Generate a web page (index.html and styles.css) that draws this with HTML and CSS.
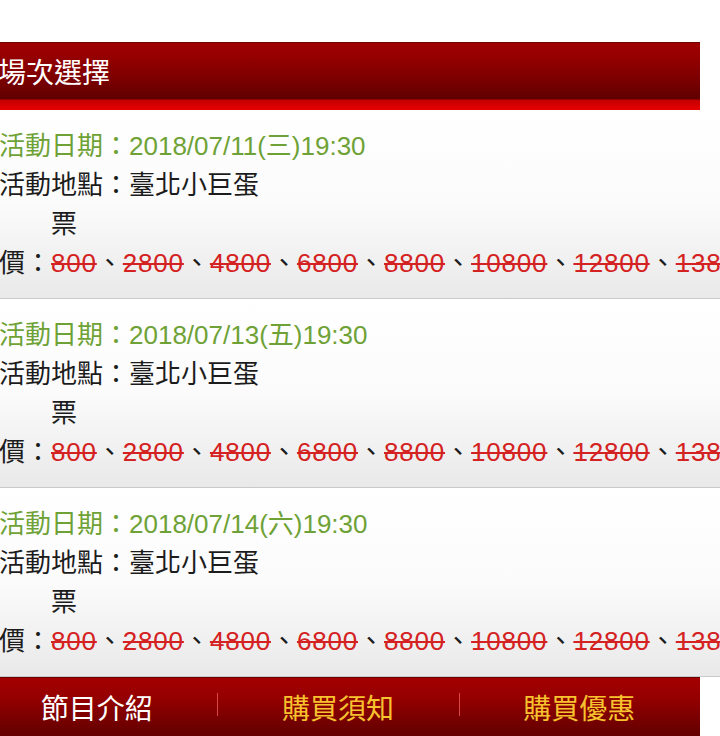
FILE: index.html
```html
<!DOCTYPE html>
<html lang="zh-Hant">
<head>
<meta charset="utf-8">
<title>場次選擇</title>
<link rel="stylesheet" href="styles.css">
</head>
<body>
<div class="page">
  <div class="section-title"><span class="section-title__text">場次選擇</span></div>

  <div class="session">
    <p class="line line--date">活動日期：2018/07/11(三)19:30</p>
    <p class="line">活動地點：臺北小巨蛋</p>
    <p class="line line--indent">票</p>
    <p class="line line--prices">價：<s>800</s>、<s>2800</s>、<s>4800</s>、<s>6800</s>、<s>8800</s>、<s>10800</s>、<s>12800</s>、<s>13800</s></p>
  </div>

  <div class="session">
    <p class="line line--date">活動日期：2018/07/13(五)19:30</p>
    <p class="line">活動地點：臺北小巨蛋</p>
    <p class="line line--indent">票</p>
    <p class="line line--prices">價：<s>800</s>、<s>2800</s>、<s>4800</s>、<s>6800</s>、<s>8800</s>、<s>10800</s>、<s>12800</s>、<s>13800</s></p>
  </div>

  <div class="session">
    <p class="line line--date">活動日期：2018/07/14(六)19:30</p>
    <p class="line">活動地點：臺北小巨蛋</p>
    <p class="line line--indent">票</p>
    <p class="line line--prices">價：<s>800</s>、<s>2800</s>、<s>4800</s>、<s>6800</s>、<s>8800</s>、<s>10800</s>、<s>12800</s>、<s>13800</s></p>
  </div>

  <nav class="tabbar">
    <a class="tab tab--active">節目介紹</a>
    <a class="tab">購買須知</a>
    <a class="tab">購買優惠</a>
  </nav>
</div>
</body>
</html>
```

FILE: styles.css
```css
html, body {
  margin: 0;
  padding: 0;
  background: #ffffff;
  overflow: hidden;
}

body {
  font-family: "Liberation Sans", "Noto Sans CJK TC", sans-serif;
  color: #1c1c1c;
}

.page {
  margin-left: -24px;
  width: 744px;
  padding-top: 42px;
}

.section-title {
  width: 724px;
  box-sizing: border-box;
  height: 68px;
  border-top: 1px solid #6e0000;
  background: linear-gradient(to bottom, #9e0000 0px, #990000 10px, #7c0000 36px, #5f0000 56px, #c40000 57px, #e60000 67px);
  padding-left: 22px;
  display: flex;
  align-items: flex-start;
}

.section-title__text {
  font-family: "Noto Sans CJK TC", sans-serif;
  color: #ffffff;
  font-size: 28px;
  line-height: 56px;
}

.session {
  box-sizing: border-box;
  height: 189px;
  padding: 17px 24px 15px 23px;
  border-bottom: 1px solid #c9c9c9;
  background: linear-gradient(to bottom, #ffffff 0%, #fbfbfb 50%, #e9e9e9 100%);
  overflow: hidden;
}

.line {
  margin: 0;
  font-size: 26px;
  line-height: 39px;
  height: 39px;
  white-space: nowrap;
}

.line--date {
  color: #6fa236;
}

.line--indent {
  padding-left: 52px;
}

.line--prices s {
  color: #d42222;
  letter-spacing: 0.8px;
  text-decoration: line-through;
  text-decoration-thickness: 2px;
}

.tabbar {
  width: 724px;
  height: 70px;
  box-sizing: border-box;
  border-top: 1px solid #6a0000;
  background: linear-gradient(to bottom, #a40000 0%, #940000 30%, #6a0000 75%, #5e0000 100%);
  display: grid;
  grid-template-columns: repeat(3, 1fr);
  align-items: start;
}

.tab {
  font-family: "Noto Sans CJK TC", sans-serif;
  font-size: 28px;
  line-height: 58px;
  text-align: center;
  color: #f7c22e;
  position: relative;
}

.tab--active {
  color: #ffffff;
}

.tab + .tab::before {
  content: "";
  position: absolute;
  left: 0;
  top: 15px;
  height: 23px;
  width: 1px;
  background: #d84848;
}
```
